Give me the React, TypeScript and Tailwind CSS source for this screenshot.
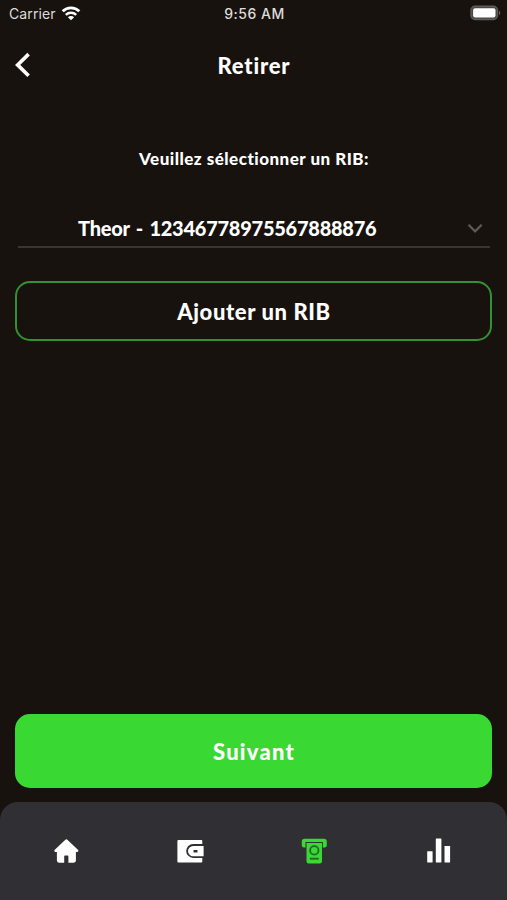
import { useState } from 'react'

const accounts = ['Theor - 12346778975567888876']

function WifiIcon() {
  return (
    <svg width="20" height="16" viewBox="0 0 20 16" fill="none" stroke="white" strokeWidth="2.9">
      <path d="M1.7 6.2a11.9 11.9 0 0 1 16.6 0" />
      <path d="M4.8 9.9a7.5 7.5 0 0 1 10.4 0" strokeWidth="2.6" />
      <path d="M10 15.3 6.9 12.2a4.4 4.4 0 0 1 6.2 0z" fill="white" stroke="none" />
    </svg>
  )
}

function BatteryIcon() {
  return (
    <svg width="32" height="16" viewBox="0 0 32 16">
      <rect x="1" y="1.3" width="26.4" height="13.2" rx="4" fill="#4a4745" stroke="#5f5c59" strokeWidth="1.4" />
      <rect x="3.1" y="3.2" width="22.4" height="9.4" rx="2" fill="white" />
      <path d="M28.9 5.6c1.9.8 1.9 3.8 0 4.6z" fill="#65625f" />
    </svg>
  )
}

function HomeIcon() {
  return (
    <svg width="28" height="28" viewBox="0 0 28 28" fill="currentColor">
      <path d="M13.1 2.9a1.9 1.9 0 0 1 2.5 0L25.9 12.8c1 1 .4 2.2-.8 2.2H23.9V23.6a2.1 2.1 0 0 1-2.1 2.1H16.4V19.2a.7.7 0 0 0-.7-.7H12.9a.7.7 0 0 0-.7.7V25.7H7a2.1 2.1 0 0 1-2.1-2.1V15H3.6c-1.2 0-1.8-1.2-.8-2.2z" />
    </svg>
  )
}

function WalletIcon() {
  return (
    <svg width="28" height="28" viewBox="0 0 28 28" fill="currentColor">
      <path d="M2.4 3H25.3a1 1 0 0 1 1 1V6.9H17.2a7 7 0 0 0 0 14H26.3V24.5a1 1 0 0 1-1 1H2.4a1 1 0 0 1-1-1V4a1 1 0 0 1 1-1z" />
      <path
        fillRule="evenodd"
        d="M17.2 8.9H27.6V19.3H17.2a5.2 5.2 0 0 1 0-10.4zM18 13a.5.5 0 0 0-.5.5v1.6a.5.5 0 0 0 .5.5h3a.5.5 0 0 0 .5-.5v-1.6a.5.5 0 0 0-.5-.5z"
      />
    </svg>
  )
}

function WithdrawIcon() {
  return (
    <svg width="28" height="28" viewBox="0 0 28 28" fill="currentColor">
      <path d="M4.6 1.7H24a2.8 2.8 0 0 1 2.8 2.8V8.2a2.2 2.2 0 0 1-2.2 2.2H22.9V4.9H5.5V10.4H4a2.2 2.2 0 0 1-2.2-2.2V4.5a2.8 2.8 0 0 1 2.8-2.8z" />
      <path d="M6.5 6H22V24.2a2.2 2.2 0 0 1-2.2 2.2H8.7a2.2 2.2 0 0 1-2.2-2.2z" />
      <circle cx="14.3" cy="13.4" r="4.2" fill="none" stroke="#24672a" strokeWidth="1.8" />
      <path d="M9.9 21.7h8.8" stroke="#24672a" strokeWidth="1.9" />
    </svg>
  )
}

function StatsIcon() {
  return (
    <svg width="28" height="28" viewBox="0 0 28 28" fill="currentColor">
      <rect x="3.2" y="14.2" width="5.4" height="11.3" rx="0.4" />
      <rect x="11.8" y="1.6" width="5.6" height="23.9" rx="0.4" />
      <rect x="20.5" y="9" width="5.6" height="16.5" rx="0.4" />
    </svg>
  )
}

const tabs = [
  { id: 'home', icon: HomeIcon },
  { id: 'wallet', icon: WalletIcon },
  { id: 'withdraw', icon: WithdrawIcon },
  { id: 'stats', icon: StatsIcon },
]

export default function App() {
  const [activeTab, setActiveTab] = useState('withdraw')

  return (
    <div className="flex h-[900px] w-[507px] flex-col overflow-hidden bg-[#17120e] font-['Lato',sans-serif] font-black text-white">
      {/* Status bar */}
      <div className="grid h-[26px] shrink-0 grid-cols-3 items-center pr-[5px] pl-[9px] font-['Inter',sans-serif] text-[14px] text-[#dedcda]">
        <div className="flex items-center gap-[5px] font-normal tracking-[0.1px]">
          <span>Carrier</span>
          <WifiIcon />
        </div>
        <span className="pr-[2px] text-center font-medium tracking-[0.5px]">9:56 AM</span>
        <div className="flex justify-end">
          <BatteryIcon />
        </div>
      </div>

      {/* Header */}
      <header className="grid h-[77px] shrink-0 grid-cols-[60px_1fr_60px] items-center">
        <button type="button" aria-label="Retour" className="pl-[14px]">
          <svg width="16" height="26" viewBox="0 0 16 26" fill="none" stroke="white" strokeWidth="3.6">
            <path d="M14.6 2.1 3.6 12.9 14.6 23.7" />
          </svg>
        </button>
        <h1 className="pt-px pl-px text-center text-[22px] tracking-[0.8px]">Retirer</h1>
      </header>

      <main className="flex flex-1 flex-col px-[15px] pb-[14px]">
        <p className="mt-[44px] pl-px text-center text-[17px] leading-6 tracking-[0.48px]">
          Veuillez sélectionner un RIB:
        </p>

        <button
          type="button"
          className="mr-[2px] ml-[3px] mt-[39px] flex h-[38px] items-center border-b-2 border-[#393531] pr-[6px] pl-[60px] text-[20px] tracking-[-0.25px] [word-spacing:1.9px]"
        >
          <span className="flex-1 pb-px text-left whitespace-nowrap">{accounts[0]}</span>
          <svg width="18" height="12" viewBox="0 0 18 12" fill="none" stroke="#5d5a57" strokeWidth="2.2">
            <path d="m2.5 2.8 6.6 6.6 6.6-6.6" />
          </svg>
        </button>

        <button
          type="button"
          className="mt-[33px] h-[60px] rounded-[15px] border-2 border-[#339230] pl-px text-[22px] tracking-[0.6px]"
        >
          Ajouter un RIB
        </button>

        <button
          type="button"
          className="mt-auto h-[74px] rounded-[15px] bg-[#3ad832] pl-px text-[22px] tracking-[1.2px]"
        >
          Suivant
        </button>
      </main>

      {/* Tab bar */}
      <nav className="grid h-[98px] shrink-0 grid-cols-4 rounded-t-[18px] bg-[#302f33] pr-[7px] pl-1">
        {tabs.map(({ id, icon: Icon }) => (
          <button
            key={id}
            type="button"
            aria-label={id}
            onClick={() => setActiveTab(id)}
            className={`flex items-center justify-center ${activeTab === id ? 'text-[#3ad832]' : 'text-white'}`}
          >
            <Icon />
          </button>
        ))}
      </nav>
    </div>
  )
}
